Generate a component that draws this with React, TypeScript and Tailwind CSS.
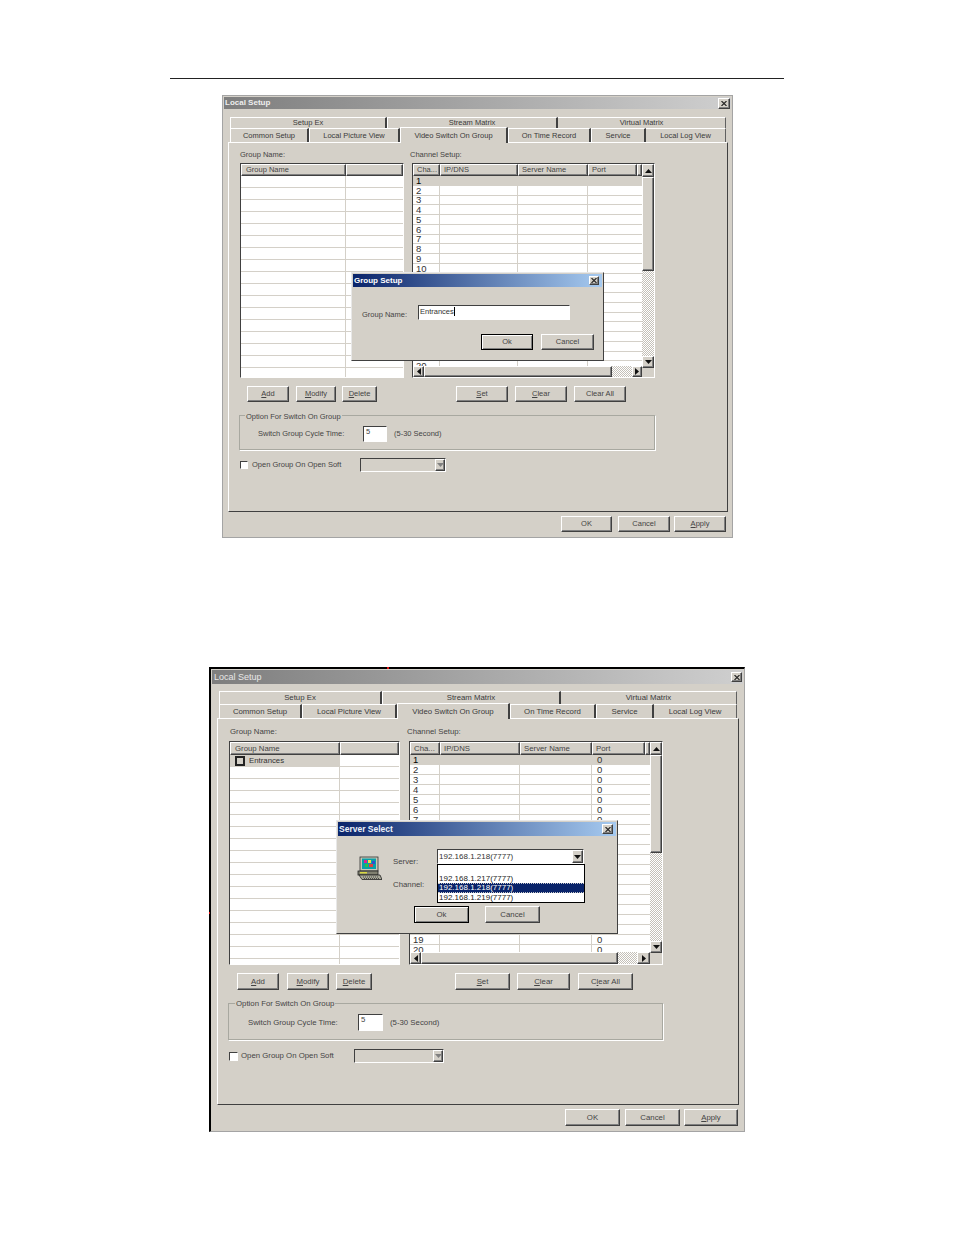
import React from "react";

const cx = (...a: (string | false | undefined)[]) => a.filter(Boolean).join(" ");
const raised = "bg-[#d4d0c8] border border-t-white border-l-white border-r-[#404040] border-b-[#404040] shadow-[inset_-1px_-1px_0_#808080]";
const sunken = "border border-t-[#404040] border-l-[#404040] border-r-white border-b-white";
const dither = "bg-[repeating-conic-gradient(#ffffff_0_25%,#c4c0b8_0_50%)] bg-[length:2px_2px]";

function Arrow({ dir, color = "#111" }: { dir: "up" | "down" | "left" | "right"; color?: string }) {
  const pts = { up: "0,4 3.5,0 7,4", down: "0,0 7,0 3.5,4", left: "4,0 4,7 0,3.5", right: "0,0 0,7 4,3.5" }[dir];
  const vertical = dir === "up" || dir === "down";
  return (
    <svg width={vertical ? 7 : 4} height={vertical ? 4 : 7} viewBox={vertical ? "0 0 7 4" : "0 0 4 7"}>
      <polygon points={pts} fill={color} />
    </svg>
  );
}

function CloseBtn({ className }: { className: string }) {
  return (
    <div className={cx(raised, "flex items-center justify-center shrink-0", className)}>
      <svg width="6" height="5" viewBox="0 0 6 5">
        <path d="M0.5 0 L5.5 5 M5.5 0 L0.5 5" stroke="#222" strokeWidth="1.1" />
      </svg>
    </div>
  );
}

function Btn({ className, children, isDefault }: { className: string; children: React.ReactNode; isDefault?: boolean }) {
  return (
    <div
      className={cx(
        "flex items-center justify-center shrink-0 text-[#444]",
        isDefault ? "bg-[#d4d0c8] border border-black shadow-[inset_1px_1px_0_#ffffff,inset_-1px_-1px_0_#808080]" : raised,
        className,
      )}
    >
      <span>{children}</span>
    </div>
  );
}

function Tab({ className, children, active, last }: { className: string; children: React.ReactNode; active?: boolean; last?: boolean }) {
  return (
    <div
      className={cx(
        "flex items-center justify-center shrink-0 bg-[#d4d0c8] border-t border-t-white text-[#3a3a3a]",
        active
          ? "relative z-10 border-l border-l-white border-r-2 border-r-[#404040] -mt-[1px] -mb-[1px]"
          : last
            ? "border-r border-r-[#606060]"
            : "border-l border-l-white border-r-2 border-r-[#404040]",
        className,
      )}
    >
      {children}
    </div>
  );
}

function GroupHead({ col1, col2, h }: { col1: string; col2: string; h: string }) {
  return (
    <div className={cx("flex shrink-0 text-[#444]", h)}>
      <div className={cx(raised, col1, "pl-[4px] flex items-center")}>Group Name</div>
      <div className={cx(raised, col2, "grow")} />
    </div>
  );
}

function GroupRow({ col1, col2, h, children, selected }: { col1: string; col2: string; h: string; children?: React.ReactNode; selected?: boolean }) {
  return (
    <div className={cx("flex shrink-0 border-b border-b-[#d4d0c8]", h)}>
      <div className={cx(col1, "border-r border-r-[#d4d0c8] flex items-center", selected && "bg-[#d4d0c8]")}>{children}</div>
      <div className={cx(col2, "grow")} />
    </div>
  );
}

function ChannelTable({ cols, headH, rowH, rowText, port, rows, hThumb, hDither, vThumb, vDither, vArrowH, w, hScrollH }: {
  cols: string[]; headH: string; rowH: string; rowText: string; port: boolean; rows: number;
  hThumb: string; hDither: string; vThumb: string; vDither: string; vArrowH: string; w: string; hScrollH: string;
}) {
  const heads = ["Cha...", "IP/DNS", "Server Name", "Port", ""];
  return (
    <div className={cx(sunken, w, "h-full flex bg-[#d4d0c8]")}>
      <div className="flex flex-col grow min-w-0">
        <div className={cx("flex shrink-0 text-[#444]", headH)}>
          {heads.map((t, i) => (
            <div key={i} className={cx(raised, cols[i], "pl-[3px] flex items-center overflow-hidden")}>{t}</div>
          ))}
        </div>
        <div className="grow min-h-0 overflow-hidden bg-white flex flex-col">
          {Array.from({ length: rows }, (_, r) => (
            <div key={r} className={cx("flex shrink-0 border-b border-b-[#d4d0c8]", rowH, r === 0 && "bg-[#d4d0c8]")}>
              {cols.map((c, i) => (
                <div key={i} className={cx(c, rowText, "flex items-center text-[#333]", i === 0 ? "pl-[3px]" : "pl-[5px]", i < 3 && "border-r border-r-[#d4d0c8]", i === 4 && "justify-end", r === 0 && i === 0 && "text-black")}>
                  {i === 0 ? r + 1 : i === 3 && port ? "0" : ""}
                  {i === 4 && <span className="w-px h-[2px] bg-[#555]" />}
                </div>
              ))}
            </div>
          ))}
        </div>
        <div className={cx("flex shrink-0", hScrollH)}>
          <div className={cx(raised, "w-[11px] flex items-center justify-center")}><Arrow dir="left" /></div>
          <div className={cx(raised, hThumb)} />
          <div className={cx(dither, hDither)} />
          <div className={cx(raised, "grow flex items-center justify-center")}><Arrow dir="right" /></div>
        </div>
      </div>
      <div className="w-[12px] shrink-0 flex flex-col">
        <div className={cx(raised, vArrowH, "flex items-center justify-center shrink-0")}><Arrow dir="up" /></div>
        <div className={cx(raised, vThumb, "shrink-0")} />
        <div className={cx(dither, vDither, "shrink-0")} />
        <div className={cx(raised, "h-[12px] flex items-center justify-center shrink-0")}><Arrow dir="down" /></div>
      </div>
    </div>
  );
}

function Computer() {
  return (
    <svg width="25" height="24" viewBox="0 0 25 24" className="shrink-0">
      <rect x="3" y="1" width="18" height="14" fill="#c8c8b8" stroke="#333" strokeWidth="0.8" />
      <rect x="5" y="2.5" width="14" height="10.5" fill="#08a0a8" />
      <rect x="7" y="4" width="3" height="3" fill="#e02090" />
      <rect x="11" y="4" width="3" height="3" fill="#f0e040" />
      <rect x="15" y="5" width="3" height="3" fill="#3050d0" />
      <rect x="8" y="8" width="3" height="3" fill="#30c040" />
      <rect x="12" y="8" width="4" height="3" fill="#e04040" />
      <rect x="1" y="15" width="20" height="4" fill="#808070" stroke="#222" strokeWidth="0.8" />
      <rect x="3" y="16" width="7" height="1.5" fill="#d8d840" />
      <polygon points="2,19 23,19 25,23.5 5,23.5" fill="#a8a898" stroke="#222" strokeWidth="0.8" />
      <path d="M6 21 H22 M7 22.5 H23" stroke="#222" strokeWidth="0.7" strokeDasharray="1 1" />
    </svg>
  );
}

const titleGrad = "bg-[linear-gradient(90deg,#0a246a,#a6caf0)]";
const rows = (n: number) => Array.from({ length: n }, (_, i) => i);

function DialogOne() {
  const c1 = "w-[105px] shrink-0";
  const c2 = "w-[57px]";
  return (
    <div className="ml-[222px] mt-[16px] w-[511px] h-[443px] relative border border-[#a4a4a4] bg-[#d4d0c8] px-[1px] pt-[1px] text-[7.5px] leading-[10px]">
      <div className="h-[12px] bg-[linear-gradient(90deg,#7e7e7e,#cfcfcf)] flex items-center justify-between pl-[1px] pr-[1px] text-[#eeeeee] font-bold text-[8px]">
        <span>Local Setup</span>
        <CloseBtn className="w-[12px] h-[11px]" />
      </div>
      <div className="pl-[6px] mt-[8px]">
        <div className="flex h-[11px]">
          <Tab className="w-[157px]">Setup Ex</Tab>
          <Tab className="w-[171px]">Stream Matrix</Tab>
          <Tab className="w-[168px]" last>Virtual Matrix</Tab>
        </div>
        <div className="flex h-[14px]">
          <Tab className="w-[79px]">Common Setup</Tab>
          <Tab className="w-[91px]">Local Picture View</Tab>
          <Tab className="w-[108px] h-[16px]" active>Video Switch On Group</Tab>
          <Tab className="w-[83px]">On Time Record</Tab>
          <Tab className="w-[55px]">Service</Tab>
          <Tab className="w-[80px]" last>Local Log View</Tab>
        </div>
      </div>
      <div className="ml-[4px] w-[500px] h-[370px] border border-t-white border-l-white border-r-[#404040] border-b-[#404040] pl-[11px] pt-[7px] text-[#444]">
        <div className="flex h-[10px] mb-[3px]">
          <div className="w-[170px]">Group Name:</div>
          <div>Channel Setup:</div>
        </div>
        <div className="flex h-[215px] gap-[8px]">
          <div className={cx(sunken, "w-[164px] h-full bg-white flex flex-col overflow-hidden")}>
            <GroupHead col1={c1} col2={c2} h="h-[12px]" />
            {rows(17).map((i) => <GroupRow key={i} col1={c1} col2={c2} h="h-[12px]" />)}
          </div>
          <ChannelTable
            w="w-[243px]" cols={["w-[27px] shrink-0", "w-[78px] shrink-0", "w-[70px] shrink-0", "w-[49px] shrink-0", "grow"]}
            headH="h-[12px]" rowH="h-[9.75px]" rowText="text-[9.5px] leading-[9px]" port={false} rows={20}
            hThumb="w-[188px]" hDither="w-[20px]" vThumb="h-[94px]" vDither="h-[85px]" vArrowH="h-[13px]" hScrollH="h-[11px]"
          />
        </div>
        <div className="flex h-[16px] mt-[8px] ml-[7px]">
          <Btn className="w-[42px]"><u>A</u>dd</Btn>
          <Btn className="w-[40px] ml-[7px]"><u>M</u>odify</Btn>
          <Btn className="w-[35px] ml-[6px]"><u>D</u>elete</Btn>
          <Btn className="w-[52px] ml-[79px]"><u>S</u>et</Btn>
          <Btn className="w-[52px] ml-[7px]"><u>C</u>lear</Btn>
          <Btn className="w-[52px] ml-[7px]">Clear All</Btn>
        </div>
        <div className="relative -ml-[1px] mt-[13px] w-[417px] h-[36px] border border-t-[#a8a8a0] border-l-[#a8a8a0] border-r-white border-b-white shadow-[inset_-1px_-1px_0_#a8a8a0] flex items-start pt-[10px] pl-[18px]">
          <span className="absolute -top-[4px] left-[5px] bg-[#d4d0c8] px-[1px]">Option For Switch On Group</span>
          <div className="w-[105px] h-[16px] flex items-center">Switch Group Cycle Time:</div>
          <div className={cx(sunken, "w-[24px] h-[16px] bg-white pl-[2px]")}>5</div>
          <div className="ml-[7px] h-[16px] flex items-center">(5-30 Second)</div>
        </div>
        <div className="flex items-center h-[14px] mt-[7px]">
          <div className={cx(sunken, "w-[8px] h-[8px] bg-white shrink-0")} />
          <div className="ml-[4px] w-[108px]">Open Group On Open Soft</div>
          <div className={cx(sunken, "w-[86px] h-[14px] flex justify-end")}>
            <div className={cx(raised, "w-[10px] h-full flex items-center justify-center")}><Arrow dir="down" color="#808080" /></div>
          </div>
        </div>
      </div>
      <div className="flex justify-end mt-[4px] pr-[5px] text-[#444]">
        <Btn className="w-[51px] h-[16px]">OK</Btn>
        <Btn className="w-[52px] h-[16px] ml-[6px]">Cancel</Btn>
        <Btn className="w-[52px] h-[16px] ml-[4px]"><u>A</u>pply</Btn>
      </div>
      <div className="absolute left-[128px] top-[176px] w-[253px] h-[89px] bg-[#d4d0c8] border border-t-[#e8e8e8] border-l-[#e8e8e8] border-r-[#404040] border-b-[#404040] p-[1px] text-[#444]">
        <div className={cx(titleGrad, "h-[13px] flex items-center justify-between pl-[1px] pr-[3px] text-white font-bold text-[8px]")}>
          <span>Group Setup</span>
          <CloseBtn className="w-[10px] h-[9px]" />
        </div>
        <div className="flex items-center h-[15px] mt-[18px] pl-[9px]">
          <div className="w-[56px] pt-[5px]">Group Name:</div>
          <div className={cx(sunken, "w-[152px] h-[15px] bg-white pl-[1px] text-[#333] flex items-center pb-[2px]")}>
            <span>Entrances</span><span className="w-px h-[9px] bg-black" />
          </div>
        </div>
        <div className="flex justify-end mt-[14px] pr-[8px]">
          <Btn className="w-[52px] h-[16px]" isDefault>Ok</Btn>
          <Btn className="w-[53px] h-[16px] ml-[8px]">Cancel</Btn>
        </div>
      </div>
    </div>
  );
}

function DialogTwo() {
  const c1 = "w-[110px] shrink-0";
  const c2 = "w-[59px]";
  return (
    <div className="ml-[209px] mt-[129px] w-[536px] h-[465px] relative border-t-2 border-l-2 border-t-black border-l-black border-r border-b border-r-[#a4a4a4] border-b-[#a4a4a4] bg-[#d4d0c8] pt-[1px] text-[7.8px] leading-[10px]">
      <span className="absolute -top-[2px] left-[176px] w-[2px] h-[2px] bg-[#e01010]" />
      <span className="absolute top-[243px] -left-[2px] w-[1px] h-[2px] bg-[#e01010]" />
      <div className="mx-[1px] h-[14px] bg-[linear-gradient(90deg,#7e7e7e,#cfcfcf)] flex items-center justify-between pl-[2px] pr-[1px] text-[#e8e8e8] text-[9px]">
        <span>Local Setup</span>
        <CloseBtn className="w-[11px] h-[10px]" />
      </div>
      <div className="pl-[8px] mt-[7px]">
        <div className="flex h-[13px]">
          <Tab className="w-[163px]">Setup Ex</Tab>
          <Tab className="w-[179px]">Stream Matrix</Tab>
          <Tab className="w-[176px]" last>Virtual Matrix</Tab>
        </div>
        <div className="flex h-[14px]">
          <Tab className="w-[83px]">Common Setup</Tab>
          <Tab className="w-[95px]">Local Picture View</Tab>
          <Tab className="w-[113px] h-[16px]" active>Video Switch On Group</Tab>
          <Tab className="w-[86px]">On Time Record</Tab>
          <Tab className="w-[58px]">Service</Tab>
          <Tab className="w-[83px]" last>Local Log View</Tab>
        </div>
      </div>
      <div className="ml-[6px] w-[522px] h-[387px] border border-t-white border-l-white border-r-[#404040] border-b-[#404040] pl-[11px] pt-[8px] text-[#444]">
        <div className="flex h-[10px] mb-[4px] pl-[1px]">
          <div className="w-[177px]">Group Name:</div>
          <div>Channel Setup:</div>
        </div>
        <div className="flex h-[224px] gap-[9px]">
          <div className={cx(sunken, "w-[171px] h-full bg-white flex flex-col overflow-hidden")}>
            <GroupHead col1={c1} col2={c2} h="h-[13px]" />
            <GroupRow col1={c1} col2={c2} h="h-[12px]" selected>
              <span className="ml-[5px] w-[10px] h-[10px] border-2 border-[#222] bg-[#d4d0c8] shrink-0" />
              <span className="ml-[4px] text-[#333]">Entrances</span>
            </GroupRow>
            {rows(17).map((i) => <GroupRow key={i} col1={c1} col2={c2} h="h-[12px]" />)}
          </div>
          <ChannelTable
            w="w-[254px]" cols={["w-[30px] shrink-0", "w-[80px] shrink-0", "w-[72px] shrink-0", "w-[53px] shrink-0", "grow"]}
            headH="h-[13px]" rowH="h-[10px]" rowText="text-[9.5px] leading-[9px]" port rows={20}
            hThumb="w-[197px]" hDither="w-[19px]" vThumb="h-[98px]" vDither="h-[88px]" vArrowH="h-[13px]" hScrollH="h-[12px]"
          />
        </div>
        <div className="flex h-[17px] mt-[8px] ml-[8px]">
          <Btn className="w-[42px]"><u>A</u>dd</Btn>
          <Btn className="w-[42px] ml-[8px]"><u>M</u>odify</Btn>
          <Btn className="w-[36px] ml-[7px]"><u>D</u>elete</Btn>
          <Btn className="w-[55px] ml-[83px]"><u>S</u>et</Btn>
          <Btn className="w-[53px] ml-[7px]"><u>C</u>lear</Btn>
          <Btn className="w-[55px] ml-[8px]">C<u>l</u>ear All</Btn>
        </div>
        <div className="relative -ml-[1px] mt-[13px] w-[436px] h-[38px] border border-t-[#a8a8a0] border-l-[#a8a8a0] border-r-white border-b-white shadow-[inset_-1px_-1px_0_#a8a8a0] flex items-start pt-[10px] pl-[19px]">
          <span className="absolute -top-[5px] left-[6px] bg-[#d4d0c8] px-[1px]">Option For Switch On Group</span>
          <div className="w-[110px] h-[17px] flex items-center">Switch Group Cycle Time:</div>
          <div className={cx(sunken, "w-[25px] h-[17px] bg-white pl-[2px]")}>5</div>
          <div className="ml-[7px] h-[17px] flex items-center">(5-30 Second)</div>
        </div>
        <div className="flex items-center h-[14px] mt-[8px]">
          <div className={cx(sunken, "w-[9px] h-[9px] bg-white shrink-0")} />
          <div className="ml-[3px] w-[113px]">Open Group On Open Soft</div>
          <div className={cx(sunken, "w-[90px] h-[14px] flex justify-end")}>
            <div className={cx(raised, "w-[10px] h-full flex items-center justify-center")}><Arrow dir="down" color="#808080" /></div>
          </div>
        </div>
      </div>
      <div className="flex justify-end mt-[4px] pr-[6px]">
        <Btn className="w-[55px] h-[17px]">OK</Btn>
        <Btn className="w-[55px] h-[17px] ml-[5px]">Cancel</Btn>
        <Btn className="w-[54px] h-[17px] ml-[4px]"><u>A</u>pply</Btn>
      </div>
      <div className="absolute left-[125px] top-[151px] w-[282px] h-[114px] bg-[#d4d0c8] border border-t-[#e8e8e8] border-l-[#e8e8e8] border-r-[#404040] border-b-[#404040] p-[1px] text-[#444]">
        <div className={cx(titleGrad, "h-[14px] flex items-center justify-between pl-[1px] pr-[3px] text-[#eef2fa] text-[8.5px] font-bold")}>
          <span>Server Select</span>
          <CloseBtn className="w-[11px] h-[10px]" />
        </div>
        <div className="flex mt-[20px] ml-[19px] h-[24px]">
          <Computer />
          <div className="ml-[11px] flex flex-col gap-[13px] pt-[1px] w-[44px]">
            <span>Server:</span>
            <span>Channel:</span>
          </div>
          <div className="relative -mt-[7px]">
            <div className={cx(sunken, "w-[147px] h-[15px] bg-white flex items-center justify-between text-[8px] pl-[1px] text-[#333]")}>
              <span>192.168.1.218(7777)</span>
              <div className={cx(raised, "w-[11px] h-[13px] flex items-center justify-center")}><Arrow dir="down" /></div>
            </div>
            <div className="absolute top-[15px] left-0 w-[148px] h-[39px] bg-white border border-black text-[8px] leading-[9px] flex flex-col justify-end text-[#222]">
              <div className="h-[9px] pl-[1px]">192.168.1.217(7777)</div>
              <div className="h-[10px] pl-[1px] bg-[#0a246a] text-white border-y border-dotted border-y-[#c8c8c8] leading-[8px]">192.168.1.218(7777)</div>
              <div className="h-[9px] pl-[1px]">192.168.1.219(7777)</div>
            </div>
          </div>
        </div>
        <div className="flex mt-[26px] ml-[76px]">
          <Btn className="w-[55px] h-[17px]" isDefault>Ok</Btn>
          <Btn className="w-[55px] h-[17px] ml-[16px]">Cancel</Btn>
        </div>
      </div>
    </div>
  );
}

export default function App() {
  return (
    <div className="w-[954px] h-[1235px] bg-white overflow-hidden font-['Liberation_Sans',sans-serif] pt-[78px]">
      <div className="ml-[170px] w-[614px] h-px bg-[#222]" />
      <DialogOne />
      <DialogTwo />
    </div>
  );
}
